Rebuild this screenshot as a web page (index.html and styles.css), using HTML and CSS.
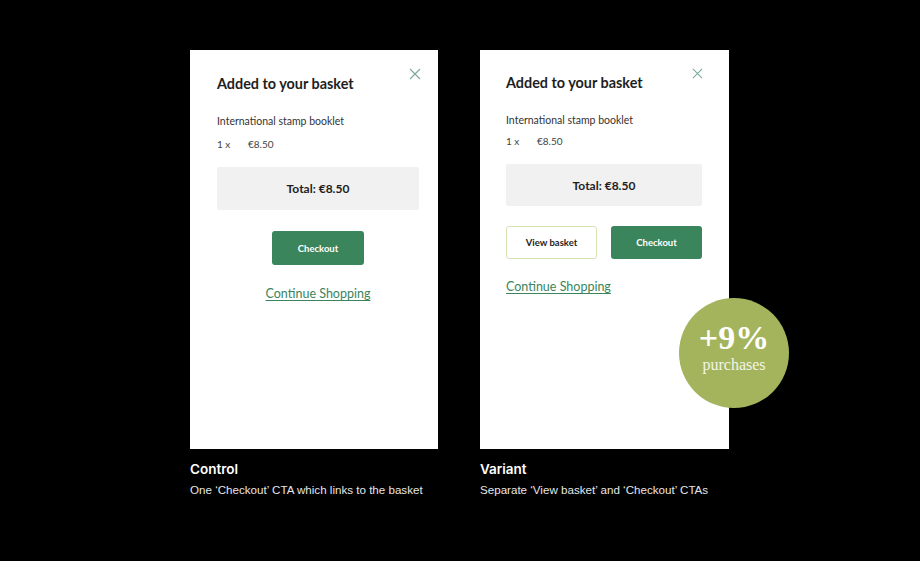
FILE: index.html
```html
<!DOCTYPE html>
<html lang="en">
<head>
    <meta charset="UTF-8">
    <meta name="viewport" content="width=device-width, initial-scale=1.0">
    <title>Basket CTA test</title>
    <link rel="stylesheet" href="styles.css">
</head>
<body>

    <div class="board">
        <div class="column">
            <div class="card control">
                <div class="card-head">
                    <h2>Added to your basket</h2>
                    <svg class="close" width="12" height="12" viewBox="0 0 12 12">
                        <path d="M1 1L11 11M11 1L1 11" stroke="#7aa898" stroke-width="1.1" fill="none"/>
                    </svg>
                </div>
                <p class="item">International stamp booklet</p>
                <p class="qty"><span>1 x</span><span>€8.50</span></p>
                <div class="total">Total: €8.50</div>
                <div class="actions center">
                    <button class="btn primary">Checkout</button>
                </div>
                <a class="continue center" href="#">Continue Shopping</a>
            </div>
            <h3>Control</h3>
            <p class="desc">One ‘Checkout’ CTA which links to the basket</p>
        </div>

        <div class="column">
            <div class="card variant">
                <div class="card-head">
                    <h2>Added to your basket</h2>
                    <svg class="close" width="12" height="12" viewBox="0 0 12 12">
                        <path d="M1 1L11 11M11 1L1 11" stroke="#7aa898" stroke-width="1.1" fill="none"/>
                    </svg>
                </div>
                <p class="item">International stamp booklet</p>
                <p class="qty"><span>1 x</span><span>€8.50</span></p>
                <div class="total">Total: €8.50</div>
                <div class="actions split">
                    <button class="btn outline">View basket</button>
                    <button class="btn primary">Checkout</button>
                </div>
                <a class="continue" href="#">Continue Shopping</a>

                <div class="badge">
                    <span class="big">+9%</span>
                    <span class="small">purchases</span>
                </div>
            </div>
            <h3>Variant</h3>
            <p class="desc">Separate ‘View basket’ and ‘Checkout’ CTAs</p>
        </div>
    </div>

</body>
</html>
```

FILE: styles.css
```css
body {
    margin: 0;
    background-color: #000;
    font-family: 'Lato', 'Noto Sans', sans-serif;
    height: 100vh;
}

.board {
    display: flex;
    gap: 42px;
    padding: 50px 0 0 190px;
}

.column {
    width: 248px;
}

.column:last-child {
    width: 249px;
}

.card {
    position: relative;
    background-color: #fff;
    height: 399px;
    box-sizing: border-box;
    color: #222;
}

.card.control {
    padding: 25px 19px 0 27px;
}

.card.variant {
    padding: 24px 27px 0 26px;
}

.card-head {
    display: flex;
    justify-content: space-between;
    align-items: flex-start;
}

.card-head h2 {
    margin: 0;
    font-size: 14.4px;
    font-weight: 700;
    color: #1e1e1e;
}

.close {
    margin-top: -7px;
}

.control .close {
    margin-right: -2px;
}

.variant .close {
    margin-top: -6px;
    margin-right: -1px;
    width: 11px;
    height: 11px;
}

.item {
    margin: 23px 0 0;
    font-size: 10.5px;
    color: #333;
}

.qty {
    margin: 11px 0 0;
    font-size: 10px;
    color: #444;
}

.variant .qty {
    margin-top: 9px;
}

.qty span:first-child {
    display: inline-block;
    width: 31px;
}

.total {
    margin-top: 17px;
    background-color: #f1f1f1;
    height: 43px;
    display: flex;
    align-items: center;
    justify-content: center;
    font-size: 12px;
    font-weight: 700;
    color: #1e1e1e;
    border-radius: 2px;
}

.variant .total {
    margin-top: 17px;
    height: 42px;
}

.actions {
    margin-top: 21px;
    display: flex;
}

.variant .actions {
    margin-top: 20px;
}

.actions.center {
    justify-content: center;
}

.actions.split {
    justify-content: space-between;
}

.btn {
    width: 92px;
    height: 34px;
    border-radius: 3px;
    font-family: 'Lato', sans-serif;
    font-size: 9.5px;
    font-weight: 700;
    cursor: pointer;
}

.variant .btn {
    width: 91px;
    height: 33px;
}

.btn.primary {
    background-color: #3a855b;
    border: none;
    color: #fff;
}

.btn.outline {
    background-color: #fff;
    border: 1px solid #d5e2b4;
    color: #1e1e1e;
}

.continue {
    display: block;
    margin-top: 20px;
    font-size: 12.5px;
    color: #3a855b;
    text-decoration: underline;
    text-underline-offset: 2px;
}

.continue.center {
    text-align: center;
    margin-top: 21px;
}

.badge {
    position: absolute;
    left: 199px;
    top: 248px;
    width: 110px;
    height: 110px;
    border-radius: 50%;
    background-color: #a3b45c;
    color: #fff;
    display: flex;
    flex-direction: column;
    align-items: center;
    justify-content: center;
    font-family: 'Liberation Serif', 'DejaVu Serif', serif;
}

.badge .big {
    font-size: 34px;
    font-weight: 700;
    line-height: 1;
    margin-top: -10px;
}

.badge .small {
    font-size: 16px;
    line-height: 1.2;
    color: #f2f5e6;
}

h3 {
    margin: 12px 0 0;
    font-family: 'Inter', sans-serif;
    font-size: 13.5px;
    font-weight: 600;
    color: #fff;
}

.desc {
    margin: 6px 0 0;
    font-family: 'Liberation Sans', Arial, sans-serif;
    font-size: 11.6px;
    color: #e6e6e6;
    white-space: nowrap;
}
```
